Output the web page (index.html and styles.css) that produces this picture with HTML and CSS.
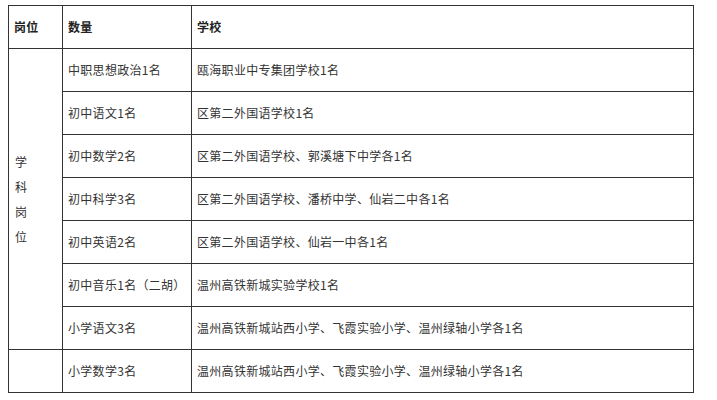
FILE: index.html
```html
<!DOCTYPE html>
<html lang="zh">
<head>
<meta charset="utf-8">
<link rel="stylesheet" href="styles.css">
</head>
<body>
<table class="tbl">
  <colgroup>
    <col class="c1"><col class="c2"><col class="c3">
  </colgroup>
  <tr class="head">
    <th>岗位</th><th>数量</th><th>学校</th>
  </tr>
  <tr>
    <td rowspan="7" class="vert">学<br>科<br>岗<br>位</td>
    <td>中职思想政治1名</td><td>瓯海职业中专集团学校1名</td>
  </tr>
  <tr><td>初中语文1名</td><td>区第二外国语学校1名</td></tr>
  <tr><td>初中数学2名</td><td>区第二外国语学校、郭溪塘下中学各1名</td></tr>
  <tr><td>初中科学3名</td><td>区第二外国语学校、潘桥中学、仙岩二中各1名</td></tr>
  <tr><td>初中英语2名</td><td>区第二外国语学校、仙岩一中各1名</td></tr>
  <tr><td>初中音乐1名（二胡）</td><td>温州高铁新城实验学校1名</td></tr>
  <tr><td>小学语文3名</td><td>温州高铁新城站西小学、飞霞实验小学、温州绿轴小学各1名</td></tr>
  <tr><td></td><td>小学数学3名</td><td>温州高铁新城站西小学、飞霞实验小学、温州绿轴小学各1名</td></tr>
</table>
</body>
</html>
```
FILE: styles.css
```css
html, body {
  margin: 0;
  padding: 0;
  background: #fff;
}
body {
  padding: 5px 0 0 8px;
  font-family: "Noto Sans CJK SC", "Noto Sans", sans-serif;
  font-size: 12px;
  color: #333;
}
.tbl {
  border-collapse: collapse;
  table-layout: fixed;
  width: 685px;
}
.c1 { width: 54px; }
.c2 { width: 129px; }
.c3 { width: 502px; }
.tbl th, .tbl td {
  border: 1px solid #333;
  height: 42px;
  padding: 0 5px;
  text-align: left;
  vertical-align: middle;
  letter-spacing: 0.3px;
  line-height: 18px;
  white-space: nowrap;
}
.tbl th {
  font-weight: bold;
  color: #222;
}
.tbl .vert {
  line-height: 25px;
  padding-left: 6px;
}
```
